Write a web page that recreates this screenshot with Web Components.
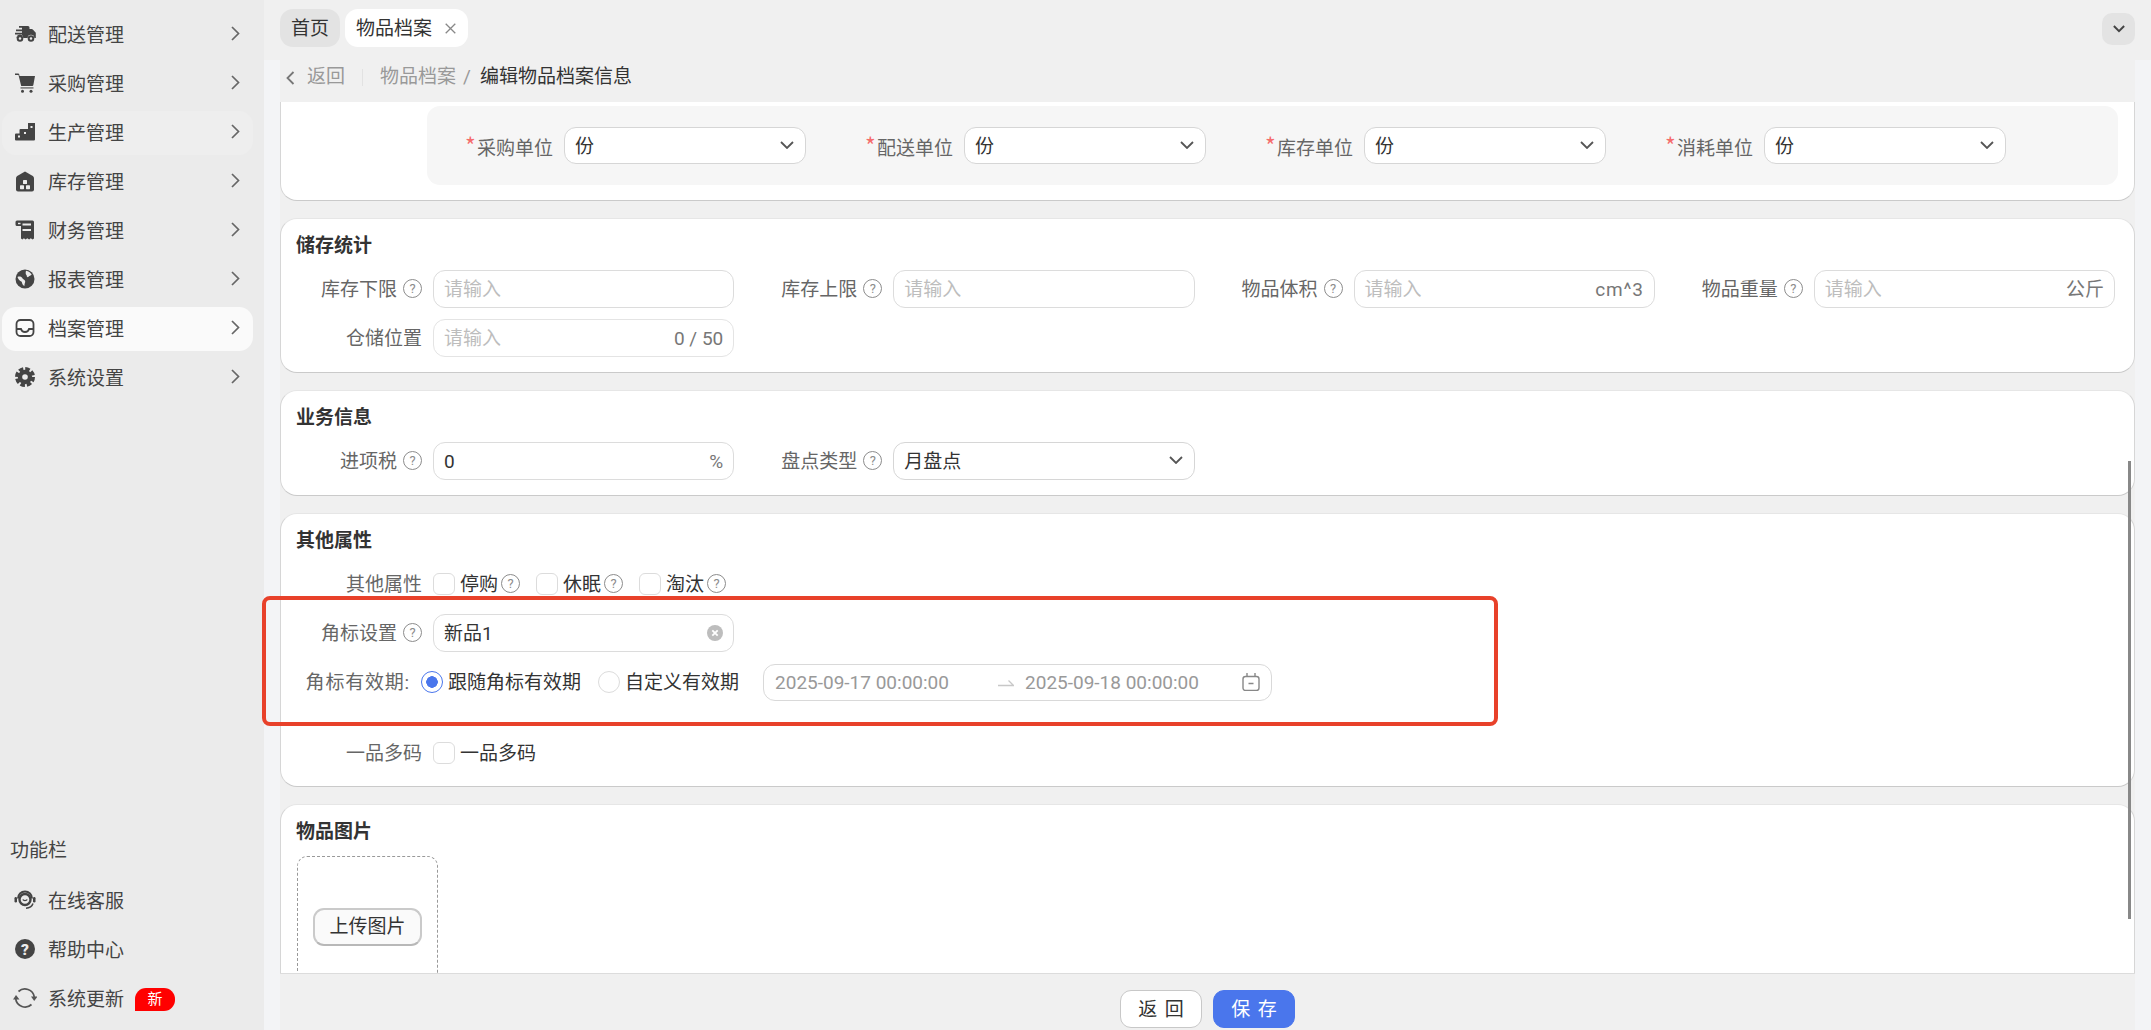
<!DOCTYPE html>
<html lang="zh-CN">
<head>
<meta charset="utf-8">
<title>编辑物品档案信息</title>
<style>
html,body{margin:0;height:100%;overflow:hidden}
body{font:400 19px/1.2 Roboto,"Noto Sans CJK SC",sans-serif;color:#333;background:#f3f4f6}
</style>
</head>
<body>
<app-shell>
  <side-nav slot="nav">
    <nav-item label="配送管理" chevron><svg viewBox="0 0 22 16" width="22" height="16" fill="#444"><path d="M5 0h9a1.5 1.5 0 011.5 1.500V3h2.200a1.500 1.500 0 011.100.500l3 3.300V12h-1.500a3.300 3.300 0 00-6.600 0H9.200a3.300 3.300 0 00-6.600 0H3v-1.800h5V8.600H1V6.800h7V5.200H2V3.400h6V1.800H5z"/><circle cx="6" cy="12.500" r="2.300" fill="#ebebeb" stroke="#444" stroke-width="2"/><circle cx="17" cy="12.500" r="2.300" fill="#ebebeb" stroke="#444" stroke-width="2"/></svg></nav-item>
    <nav-item label="采购管理" chevron><svg viewBox="0 0 20 20" width="20" height="20" fill="#444"><path d="M0 .5h3.200c.5 0 .9.300 1 .8L4.500 3H20l-1.700 9.200c-.1.500-.5.800-1 .8H6.200L3.500 2.100H0z"/><rect x="5.500" y="14.200" width="13" height="1.400" opacity=".75"/><circle cx="7.500" cy="18.300" r="1.500"/><circle cx="16" cy="18.300" r="1.500"/></svg></nav-item>
    <nav-item label="生产管理" chevron hover><svg viewBox="0 0 20 18" width="20" height="18" fill="#444"><path d="M13 .5a1 1 0 011-1h5a1 1 0 011 1v16a1 1 0 01-1 1H1a1 1 0 01-1-1v-5a1 1 0 011-1h3.500V7a1 1 0 011-1H13z"/><g fill="#ebebeb"><rect x="3" y="12.500" width="2" height="2"/><rect x="9" y="9" width="2" height="2"/><rect x="15.500" y="3" width="2" height="2"/></g></svg></nav-item>
    <nav-item label="库存管理" chevron><svg viewBox="0 0 20 21" width="20" height="21" fill="#444"><path d="M10 .5l7.800 4.600A2.500 2.500 0 0119 7.200V18.500a2 2 0 01-2 2H3a2 2 0 01-2-2V7.200a2.500 2.500 0 011.200-2.100z"/><g fill="#ebebeb"><rect x="8" y="9" width="4" height="4" rx=".6"/><rect x="5" y="14.200" width="4" height="4" rx=".6"/><rect x="11" y="14.200" width="4" height="4" rx=".6"/></g></svg></nav-item>
    <nav-item label="财务管理" chevron><svg viewBox="0 0 20 20" width="20" height="20" fill="#444"><path d="M2 .5h15.500A1.500 1.500 0 0119 2v16.500l-1.500 1-1.700-1.300-1.700 1.300-1.800-1.300-1.700 1.300-1.700-1.300-1.500 1.300-1.400-1V6H2A1.500 1.500 0 01.500 4.500V2A1.500 1.500 0 012 .5z"/><g fill="#ebebeb"><rect x="3" y="2.800" width="2.500" height="1.400"/><rect x="7.500" y="3.500" width="8.500" height="2"/><rect x="7.500" y="9" width="8.500" height="2"/></g></svg></nav-item>
    <nav-item label="报表管理" chevron><svg viewBox="0 0 20 20" width="20" height="20"><circle cx="10" cy="10" r="9.500" fill="#444"/><path d="M2.500 8c2-.8 3.500-.3 4.800 1 .6 1.500 2.600 1.500 2.900 3.200.2 1.500-1 2.300-.6 4.500-1.700-.2-2.500-2-2.800-3.800-1-.8-3-1-4.300-4.900zM11 1.800c2.500.3 4.500 1.800 5.700 3.800-1 1.200-2.500 1.200-3.500 2.500-1 .2-1.700-.7-1.500-1.800-1.200-.4-1.200-3-.7-4.500z" fill="#ebebeb"/></svg></nav-item>
    <nav-item label="档案管理" chevron active><svg viewBox="0 0 20 20" width="20" height="20" fill="none" stroke="#444" stroke-width="1.800"><rect x="1.500" y="2" width="17" height="16" rx="4"/><path d="M1.500 11H6c.5 2 2 3 4 3s3.500-1 4-3h4.500"/></svg></nav-item>
    <nav-item label="系统设置" chevron><svg viewBox="0 0 20 20" width="20" height="20"><circle cx="10" cy="10" r="7.200" fill="#444"/><circle cx="10" cy="10" r="8.200" fill="none" stroke="#444" stroke-width="3.600" stroke-dasharray="4.500 1.940"/><circle cx="10" cy="10" r="2.800" fill="#ebebeb"/></svg></nav-item>
    <nav-spacer></nav-spacer>
    <nav-heading>功能栏</nav-heading>
    <nav-item label="在线客服"><svg viewBox="0 0 22 20" width="22" height="20" fill="none" stroke="#444"><path d="M4 8.500a7 7 0 0114 0" stroke-width="2"/><circle cx="11" cy="9.500" r="5.500" stroke-width="2.400"/><path d="M8.800 9.500c.8 1.500 3.600 1.500 4.400 0" stroke-width="1.400"/><rect x="0.500" y="7" width="2.500" height="5.500" rx="1.200" fill="#444" stroke="none"/><rect x="19" y="7" width="2.500" height="5.500" rx="1.200" fill="#444" stroke="none"/><path d="M19 13.500c-1 3-3.500 4.500-7 4.800" stroke-width="1.500"/></svg></nav-item>
    <nav-item label="帮助中心"><svg viewBox="0 0 20 20" width="20" height="20"><circle cx="10" cy="10" r="10" fill="#444"/><text x="10" y="15.500" text-anchor="middle" font-family="Roboto,sans-serif" font-weight="900" font-size="15.500" fill="#ebebeb">?</text></svg></nav-item>
    <nav-item label="系统更新" badge="新"><svg viewBox="0 0 24 24" width="24" height="24" fill="none" stroke="#555" stroke-width="1.700"><path d="M5.500 5.500A9.500 9.500 0 0121.300 11"/><path d="M18.500 18.500A9.500 9.500 0 012.700 13"/><path d="M18 10.500h6.500L21.200 15zM0 13.500h6.500L3 9z" fill="#555" stroke="none"/></svg></nav-item>
  </side-nav>
  <top-tabs slot="tabs"></top-tabs>
  <crumb-bar slot="crumb"></crumb-bar>
  <scroll-pane slot="body">
    <form-card clip-top>
      <unit-panel>
        <unit-field label="采购单位"></unit-field>
        <unit-field label="配送单位"></unit-field>
        <unit-field label="库存单位"></unit-field>
        <unit-field label="消耗单位"></unit-field>
      </unit-panel>
    </form-card>
    <form-card title="储存统计">
      <field-grid>
        <form-field label="库存下限" help><text-box placeholder="请输入"></text-box></form-field>
        <form-field label="库存上限" help><text-box placeholder="请输入"></text-box></form-field>
        <form-field label="物品体积" help><text-box placeholder="请输入" suffix="cm^3" spread></text-box></form-field>
        <form-field label="物品重量" help><text-box placeholder="请输入" suffix="公斤"></text-box></form-field>
        <form-field label="仓储位置"><text-box placeholder="请输入" suffix="0 / 50" faint></text-box></form-field>
      </field-grid>
    </form-card>
    <form-card title="业务信息">
      <field-grid>
        <form-field label="进项税" help><text-box value="0" suffix="%"></text-box></form-field>
        <form-field label="盘点类型" help><select-box value="月盘点"></select-box></form-field>
      </field-grid>
    </form-card>
    <form-card title="其他属性">
      <field-grid>
        <form-field wide label="其他属性">
          <check-opt label="停购" help></check-opt>
          <check-opt label="休眠" help></check-opt>
          <check-opt label="淘汰" help></check-opt>
        </form-field>
        <form-field label="角标设置" help><text-box value="新品1" clear></text-box></form-field>
        <form-field wide label="角标有效期:" label-width="113" label-spread>
          <radio-opt label="跟随角标有效期" checked></radio-opt>
          <radio-opt label="自定义有效期"></radio-opt>
          <date-range start="2025-09-17 00:00:00" end="2025-09-18 00:00:00"></date-range>
        </form-field>
        <form-field wide spaced label="一品多码"><check-opt label="一品多码"></check-opt></form-field>
      </field-grid>
    </form-card>
    <form-card title="物品图片" clip-bottom>
      <upload-box></upload-box>
    </form-card>
  </scroll-pane>
  <foot-bar slot="foot"></foot-bar>
  <mark-box slot="mark"></mark-box>
</app-shell>
<script>
function def(name, css, render){
  customElements.define(name, class extends HTMLElement{
    connectedCallback(){
      if(this.shadowRoot) return;
      const r=this.attachShadow({mode:'open'});
      r.innerHTML='<style>'+css+'</style>'+render(this);
    }
  });
}
const attr=(e,n)=>e.getAttribute(n)||'';
const chevDown='<svg style="margin-bottom:2px" width="14" height="8" viewBox="0 0 14 8" fill="none" stroke="#555" stroke-width="1.800"><path d="M1 1l6 6 6-6"/></svg>';

def('app-shell',`
  :host{display:flex;width:2151px;height:1030px;position:relative;overflow:hidden}
  .main{flex:1;min-width:0;display:flex;flex-direction:column}
  .work{flex:1;min-height:0;display:flex;flex-direction:column;margin:0 16px;background:#f0f0f0}
`,()=>`<slot name="nav"></slot>
  <div class="main"><slot name="tabs"></slot>
    <div class="work"><slot name="crumb"></slot><slot name="body"></slot><slot name="foot"></slot></div>
  </div><slot name="mark"></slot>`);

def('side-nav',`
  :host{display:flex;flex-direction:column;gap:5px;width:264px;box-sizing:border-box;height:1030px;padding:13px 0 9px;background:#ebebeb;flex:none}
`,()=>`<slot></slot>`);
def('nav-spacer',`:host{display:block;flex:1}`,()=>``);
def('nav-heading',`:host{display:block;padding-left:10px;height:28px;line-height:30px;margin-bottom:10px;color:#444}`,()=>`<slot></slot>`);
def('nav-item',`
  :host{display:flex;align-items:center;height:44px;width:251px;margin-left:2px;box-sizing:border-box;padding-left:10px;border-radius:14px;color:#444}
  :host([active]){background:#fafafa}
  :host([hover]){background:#eeeeee}
  .ic{width:26px;display:flex;justify-content:center;align-items:center;flex:none;margin-right:10px;margin-bottom:2px}
  .t{flex:none;padding-top:2px}
  .go{margin-left:auto;margin-right:13px;display:flex;margin-bottom:3px}
  .b{margin-left:11px;width:40px;height:23px;background:#f00;color:#fff;font-size:15px;line-height:23px;text-align:center;border-radius:11px 11px 11px 0}
`,e=>`<span class="ic"><slot></slot></span><span class="t">${attr(e,'label')}</span>
  ${e.hasAttribute('chevron')?'<span class="go"><svg width="9" height="15" viewBox="0 0 9 15" fill="none" stroke="#666" stroke-width="1.700"><path d="M1 1l6.500 6.500L1 14"/></svg></span>':''}
  ${e.hasAttribute('badge')?`<span class="b">${attr(e,'badge')}</span>`:''}`);

def('top-tabs',`
  :host{display:flex;align-items:flex-start;height:60px;flex:none;box-sizing:border-box;padding:9px 16px 0;background:#f0f0f0;gap:5px}
  .tab{height:38px;box-sizing:border-box;padding:0 11px;line-height:39px;border-radius:13px;background:#e3e3e3;color:#333}
  .on{background:#fff;display:flex;align-items:center;gap:13px;padding-right:12px}
  .more{margin-left:auto;margin-top:4px;width:33px;height:32px;border-radius:10px;background:#e3e3e3;display:flex;align-items:center;justify-content:center}
`,()=>`<div class="tab">首页</div>
  <div class="tab on">物品档案<svg width="11" height="11" viewBox="0 0 11 11" stroke="#888" stroke-width="1.300"><path d="M.7.700l9.600 9.600M10.300.700L.7 10.300"/></svg></div>
  <div class="more"><svg width="12" height="8" viewBox="0 0 11 7" fill="none" stroke="#444" stroke-width="1.800"><path d="M.8.800l4.700 4.700L10.200.800"/></svg></div>`);

def('crumb-bar',`
  :host{display:flex;align-items:center;height:42px;flex:none;box-sizing:border-box;padding:0 0 7px 6px;color:#999}
  svg{margin-right:12px}
  .sep{width:1px;height:17px;background:#e2e2e2;margin:0 17px}
  .slash{margin:0 9px 0 7px}
  .cur{color:#333}
`,()=>`<svg width="9" height="14" viewBox="0 0 9 14" fill="none" stroke="#777" stroke-width="1.800"><path d="M7.500 1L1.500 7l6 6"/></svg><span>返回</span><span class="sep"></span><span>物品档案</span><span class="slash">/</span><span class="cur">编辑物品档案信息</span>`);

def('scroll-pane',`
  :host{display:flex;flex-direction:column;gap:17px;flex:1;min-height:0;overflow:hidden;position:relative;border-bottom:1px solid #dcdcdc}
  .thumb{position:absolute;right:4px;top:359px;width:3px;height:458px;background:#888}
`,()=>`<slot></slot><div class="thumb"></div>`);

def('form-card',`
  :host{display:block;flex:none;box-sizing:border-box;background:#fff;border:1px solid #d6d6d6;border-top-color:#e6e6e6;border-bottom-color:#cacaca;border-radius:17px;padding:0 16px 15px}
  :host([clip-top]){border-top:none;border-radius:0 0 17px 17px;padding-top:4px}
  :host([clip-bottom]){border-bottom:none;border-radius:17px 17px 0 0;padding-bottom:0}
  h3{margin:0 0 9px -1px;font-size:19px;font-weight:700;color:#333;height:32px;line-height:34px;padding-top:10px;box-sizing:content-box}
`,e=>`${e.getAttribute('title')?`<h3>${attr(e,'title')}</h3>`:''}<slot></slot>`);

def('unit-panel',`
  :host{display:flex;align-items:center;gap:49px;height:79px;margin-left:130px;box-sizing:border-box;padding-left:28px;background:#f6f6f6;border-radius:13px}
`,()=>`<slot></slot>`);
def('unit-field',`
  :host{display:flex;align-items:center;gap:11px;width:351px;flex:none;color:#666}
  .l{width:98px;text-align:right;flex:none;white-space:nowrap;padding-top:3px;display:flex;justify-content:flex-end;align-items:baseline}
  i{color:#f56c6c;font-style:normal;font-family:"Noto Sans CJK SC",sans-serif;width:11px;text-align:left;font-size:23px;line-height:1;margin-right:1px}
  select-box{flex:1;height:37px}
`,e=>`<span class="l"><i>*</i>${attr(e,'label')}</span><select-box value="份"></select-box>`);

def('field-grid',`
  :host{display:grid;grid-template-columns:repeat(4,1fr);gap:11px 23px;padding-right:3px}
`,()=>`<slot></slot>`);

def('form-field',`
  :host{display:flex;align-items:center;gap:11px;height:38px;min-width:0;color:#666}
  :host([wide]){grid-column:1 / -1}
  :host([spaced]){margin-top:22px;margin-bottom:-1px}
  :host([label-spread]) .tx{letter-spacing:.8px}
  .l{width:125px;flex:none;display:flex;align-items:center;justify-content:flex-end;gap:6px;white-space:nowrap}
  .tx{padding-top:2px}
  .c{flex:1;min-width:0;display:flex;align-items:center;height:100%}
`,e=>{
  const w=attr(e,'label-width');
  return `<span class="l" ${w?`style="width:${w}px"`:''}><span class="tx">${attr(e,'label')}</span>${e.hasAttribute('help')?'<help-tip></help-tip>':''}</span><div class="c"><slot></slot></div>`;
});

def('help-tip',`
  :host{display:inline-flex;width:19px;height:19px;box-sizing:border-box;border:1.500px solid #8c8c8c;border-radius:50%;align-items:center;justify-content:center;font-size:13px;line-height:1;color:#8c8c8c;flex:none;font-family:Roboto,sans-serif}
`,()=>`?`);

def('text-box',`
  :host{display:flex;align-items:center;flex:1;height:38px;min-width:0;box-sizing:border-box;border:1px solid #dcdcdc;border-radius:12px;padding:0 10px;background:#fff;color:#333}
  :host([faint]){border-color:#e4e4e4}
  :host([spread]) .s{letter-spacing:.8px}
  .v{flex:1;white-space:nowrap;padding-top:2px}
  .p{color:#bdbdbd}
  .s{color:#777;padding-top:2px}
  svg{display:block}
`,e=>{
  const v=attr(e,'value');
  return `<span class="v ${v?'':'p'}">${v||attr(e,'placeholder')}</span>`+
   (e.hasAttribute('suffix')?`<span class="s">${attr(e,'suffix')}</span>`:'')+
   (e.hasAttribute('clear')?`<svg width="16" height="16" viewBox="0 0 16 16"><circle cx="8" cy="8" r="8" fill="#bdbdbd"/><path d="M5.300 5.300l5.400 5.400M10.700 5.300l-5.400 5.400" stroke="#fff" stroke-width="1.800"/></svg>`:'');
});

def('select-box',`
  :host{display:flex;align-items:center;justify-content:space-between;flex:1;height:38px;box-sizing:border-box;border:1px solid #d6d6d6;border-radius:12px;padding:0 11px 0 10px;background:#fff;color:#333}
  span{padding-top:3px}
`,e=>`<span>${attr(e,'value')}</span>${chevDown}`);

def('check-opt',`
  :host{display:inline-flex;align-items:center;color:#333;margin-right:16px}
  .b{width:22px;height:22px;box-sizing:border-box;border:1px solid #dcdcdc;border-radius:6px;background:#fff;margin-right:5px;flex:none}
  .tx{padding-top:2px}
  help-tip{margin-left:3px}
`,e=>`<span class="b"></span><span class="tx">${attr(e,'label')}</span>${e.hasAttribute('help')?'<help-tip></help-tip>':''}`);

def('radio-opt',`
  :host{display:inline-flex;align-items:center;color:#333;margin-right:17px}
  .r{width:22px;height:22px;box-sizing:border-box;border:1px solid #dcdcdc;border-radius:50%;margin-right:5px;flex:none;background:#fff}
  :host([checked]) .r{border:1.500px solid #4a76ec;background:radial-gradient(circle,#4a76ec 0 5.500px,#fff 6px)}
  .tx{white-space:nowrap;padding-top:2px}
`,e=>`<span class="r"></span><span class="tx">${attr(e,'label')}</span>`);

def('date-range',`
  :host{display:flex;align-items:center;width:509px;height:37px;box-sizing:border-box;border:1px solid #d9d9d9;border-radius:12px;padding-left:11px;margin-left:7px;color:#999;flex:none}
  span{width:172px;white-space:nowrap;flex:none;padding-top:2px}
  .a{margin:0 11px 0 51px;flex:none}
  .c{margin-left:45px;flex:none}
`,e=>`<span>${attr(e,'start')}</span>
  <svg class="a" width="16" height="9" viewBox="0 0 16 9" fill="none" stroke="#c8c8c8" stroke-width="1.300"><path d="M0 7.500h15.500L10.500 2.500"/></svg>
  <span>${attr(e,'end')}</span>
  <svg class="c" width="18" height="18" viewBox="0 0 18 18" fill="none" stroke="#888" stroke-width="1.400"><rect x="1" y="3.500" width="16" height="14" rx="2.500"/><path d="M5 0v3.500M13 0v3.500M6.500 10.500h5"/></svg>`);

def('upload-box',`
  :host{display:flex;align-items:center;justify-content:center;width:141px;height:141px;box-sizing:border-box;border:1px dashed #999;border-radius:10px}
  button{width:109px;height:38px;padding:2px 0 0;font:inherit;color:#333;background:#fafafa;border:2px solid #cacaca;border-bottom-color:#b8b8b8;border-radius:11px}
`,()=>`<button type="button">上传图片</button>`);

def('foot-bar',`
  :host{display:flex;justify-content:center;gap:11px;height:56px;flex:none;box-sizing:border-box;padding-top:16px;background:#f0f0f0}
  button{width:82px;height:38px;padding:2px 0 0;font:inherit;word-spacing:3px;border-radius:11px;border:1px solid #c8c8c8;background:#fff;color:#333}
  .p{background:#4a76ec;border-color:#4a76ec;color:#fff}
`,()=>`<button type="button">返 回</button><button type="button" class="p">保 存</button>`);

def('mark-box',`
  :host{position:absolute;left:262px;top:596px;width:1236px;height:130px;box-sizing:border-box;border:4px solid #e8412a;border-radius:8px;pointer-events:none}
`,()=>``);
</script>
</body>
</html>
